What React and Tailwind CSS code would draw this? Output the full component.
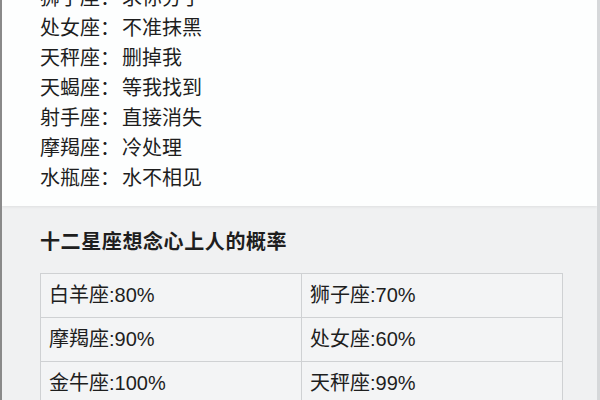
const font = { fontFamily: '"Liberation Sans", "Noto Sans CJK SC", sans-serif' };

const breakups = [
  ["狮子座", "求你分手"],
  ["处女座", "不准抹黑"],
  ["天秤座", "删掉我"],
  ["天蝎座", "等我找到"],
  ["射手座", "直接消失"],
  ["摩羯座", "冷处理"],
  ["水瓶座", "水不相见"],
];

const rates = [
  ["白羊座:80%", "狮子座:70%"],
  ["摩羯座:90%", "处女座:60%"],
  ["金牛座:100%", "天秤座:99%"],
];

export default function App() {
  return (
    <div
      className="w-[600px] h-[400px] overflow-hidden bg-[#f0f1f2] border-l-2 border-l-[#8a8a8a] border-r-[3px] border-r-[#d6d8da] text-[#1e1e1e]"
      style={font}
    >
      <section className="bg-[#fdfefe] pl-[38px] pb-[13px] shadow-[0_1px_3px_rgba(0,0,0,0.08)]">
        <div className="-mt-[17px]">
          {breakups.map(([sign, text]) => (
            <div key={sign} className="flex text-[20px] leading-[30px]">
              <span>{sign}：</span>
              <span className="ml-[2px]">{text}</span>
            </div>
          ))}
        </div>
      </section>

      <section className="pl-[38px] pt-[22px]">
        <h2 className="text-[20px] leading-[28px] font-semibold tracking-[0.6px] mb-[17px]">
          十二星座想念心上人的概率
        </h2>
        <div className="w-[523px] grid grid-cols-2 border-t border-l border-[#cfd1d3] bg-[#f3f4f5]">
          {rates.flat().map((t, i) => (
            <div
              key={i}
              className="h-[44px] flex items-center px-2 pb-[2px] border-r border-b border-[#cfd1d3] text-[20px]"
            >
              {t}
            </div>
          ))}
        </div>
      </section>
    </div>
  );
}
